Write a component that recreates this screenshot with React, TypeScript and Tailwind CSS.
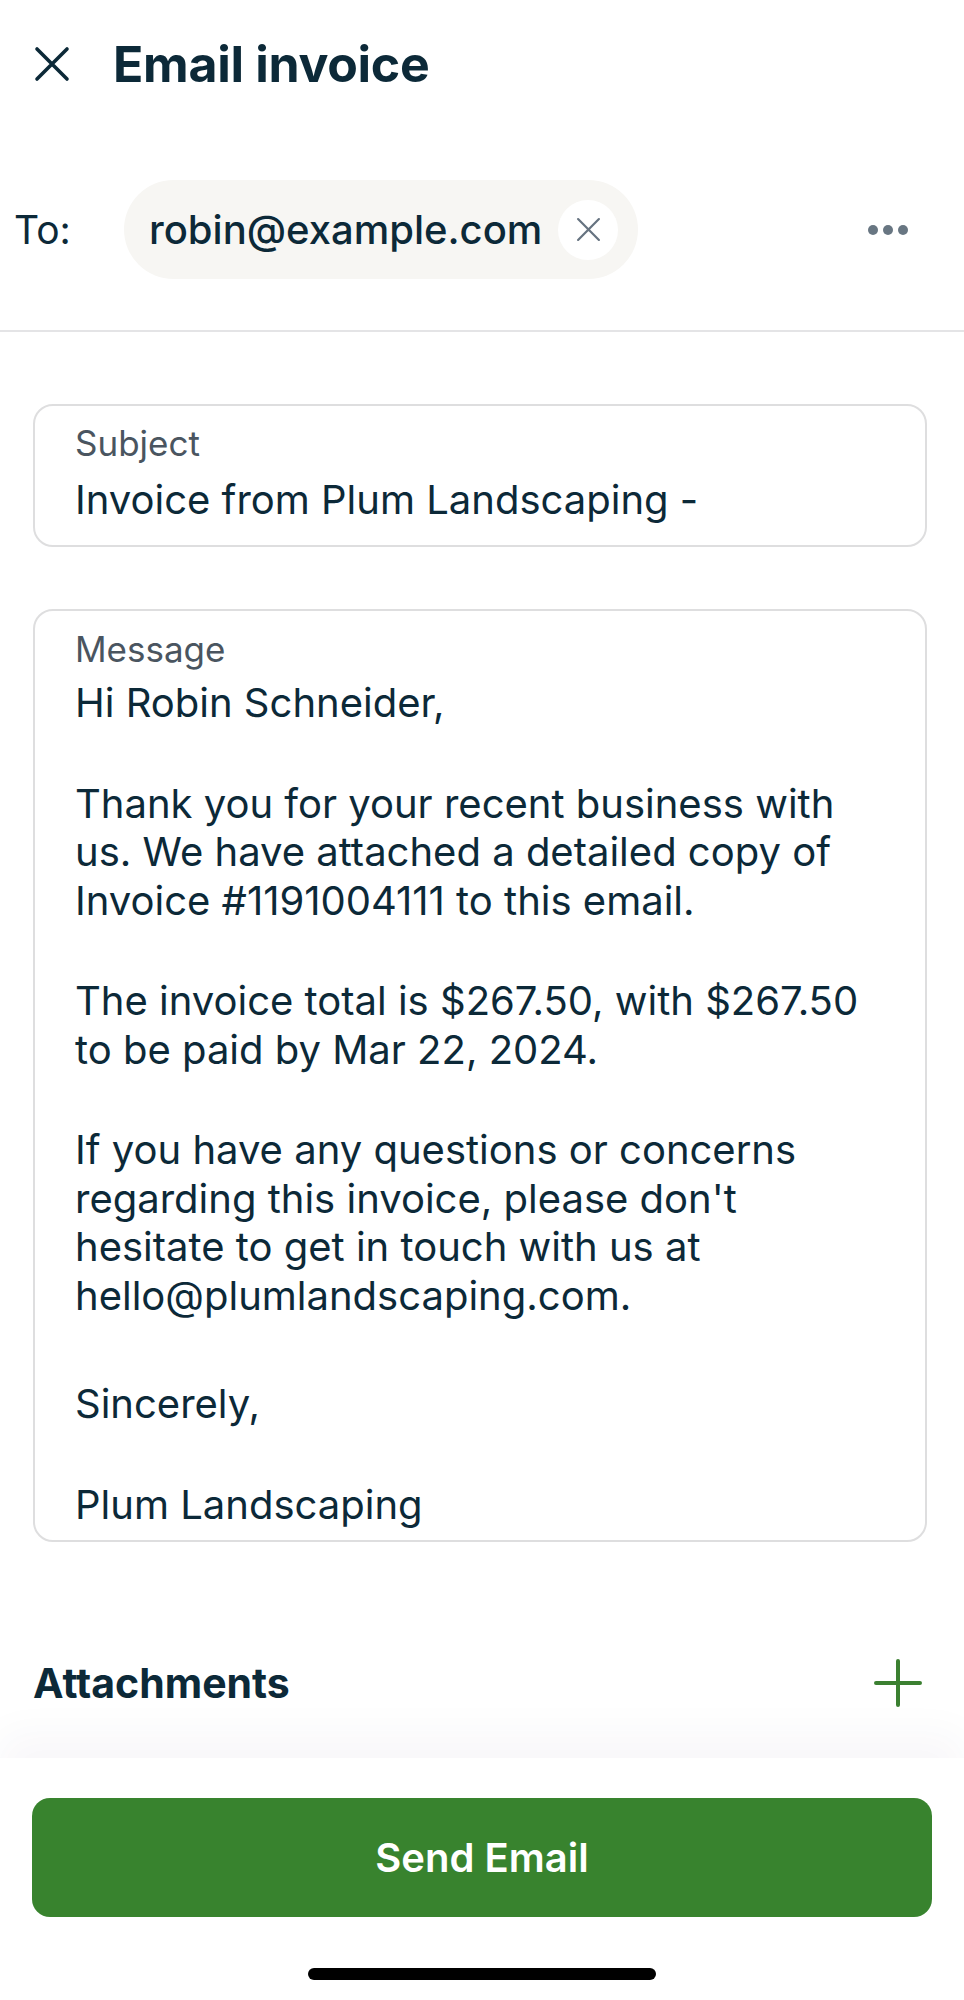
import React from 'react';

const messageParagraphs: string[][] = [
  ['Hi Robin Schneider,'],
  [
    'Thank you for your recent business with',
    'us. We have attached a detailed copy of',
    'Invoice #1191004111 to this email.',
  ],
  ['The invoice total is $267.50, with $267.50', 'to be paid by Mar 22, 2024.'],
  [
    'If you have any questions or concerns',
    "regarding this invoice, please don't",
    'hesitate to get in touch with us at',
    'hello@plumlandscaping.com.',
  ],
  ['Sincerely,'],
  ['Plum Landscaping'],
];

const CloseIcon: React.FC<{ size: number; stroke: number; color: string }> = ({ size, stroke, color }) => (
  <svg width={size} height={size} viewBox="0 0 36 36" fill="none">
    <path d="M3 3L33 33M33 3L3 33" stroke={color} strokeWidth={stroke} strokeLinecap="round" />
  </svg>
);

export default function App() {
  return (
    <div className="w-[964px] min-h-[2000px] bg-white font-['Inter',sans-serif] text-[#0c2938] flex flex-col">
      {/* Header */}
      <header className="h-[128px] flex items-center pl-[34px] gap-[43px]">
        <CloseIcon size={36} stroke={3.6} color="#0c2938" />
        <h1 className="text-[50px] font-bold leading-none tracking-[-0.3px]">Email invoice</h1>
      </header>

      {/* Recipient row */}
      <div className="mt-[52px] pb-[51px] flex items-center border-b-2 border-[#e4e4e6]">
        <span className="w-[124px] pl-[14px] text-[39px] leading-none">To:</span>
        <div className="h-[99px] rounded-full bg-[#f7f6f3] flex items-center pl-[25px] pr-[20px] gap-[16px]">
          <span className="text-[40px] font-medium leading-none">robin@example.com</span>
          <button className="w-[60px] h-[60px] rounded-full bg-white flex items-center justify-center">
            <CloseIcon size={25} stroke={3.2} color="#667380" />
          </button>
        </div>
        <div className="ml-auto mr-[56px] flex items-center gap-[5px]">
          <span className="w-[10px] h-[10px] rounded-full bg-[#687682]" />
          <span className="w-[10px] h-[10px] rounded-full bg-[#687682]" />
          <span className="w-[10px] h-[10px] rounded-full bg-[#687682]" />
        </div>
      </div>

      <main className="pl-[33px] pr-[37px] flex flex-col">
        {/* Subject */}
        <div className="mt-[72px] h-[143px] rounded-[20px] border-2 border-[#dededf] pl-[40px] pt-[17px]">
          <div className="text-[35px] leading-[40px] text-[#4a5560]">Subject</div>
          <div className="mt-[13px] text-[40px] leading-[48px]">Invoice from Plum Landscaping -</div>
        </div>

        {/* Message */}
        <div className="mt-[62px] h-[933px] rounded-[20px] border-2 border-[#dededf] pl-[40px] pt-[18px]">
          <div className="text-[35px] leading-[40px] text-[#4a5560]">Message</div>
          <div className="mt-[10px] flex flex-col text-[40px] leading-[48.5px]">
            {messageParagraphs.map((lines, i) => (
              <p key={i} className={`whitespace-nowrap ${i === 0 ? '' : i === 4 ? 'mt-[60px]' : 'mt-[52px]'}`}>
                {lines.map((line, j) => (
                  <span key={j} className="block">
                    {line}
                  </span>
                ))}
              </p>
            ))}
          </div>
        </div>

        {/* Attachments */}
        <div className="mt-[117px] flex items-center justify-between">
          <span className="text-[41px] font-bold leading-none">Attachments</span>
          <svg width="48" height="48" viewBox="0 0 48 48" fill="none" className="mr-[5px]">
            <path d="M24 2V46M2 24H46" stroke="#3b8031" strokeWidth="4" strokeLinecap="round" />
          </svg>
        </div>
      </main>

      {/* Footer */}
      <footer className="mt-auto h-[242px] bg-white shadow-[0_-24px_40px_rgba(60,40,90,0.035)] flex flex-col px-[32px]">
        <button className="mt-[40px] h-[119px] rounded-[18px] bg-[#38832e] text-white text-[40px] font-semibold">
          Send Email
        </button>
        <div className="mt-[51px] self-center w-[348px] h-[12px] rounded-full bg-black" />
      </footer>
    </div>
  );
}
